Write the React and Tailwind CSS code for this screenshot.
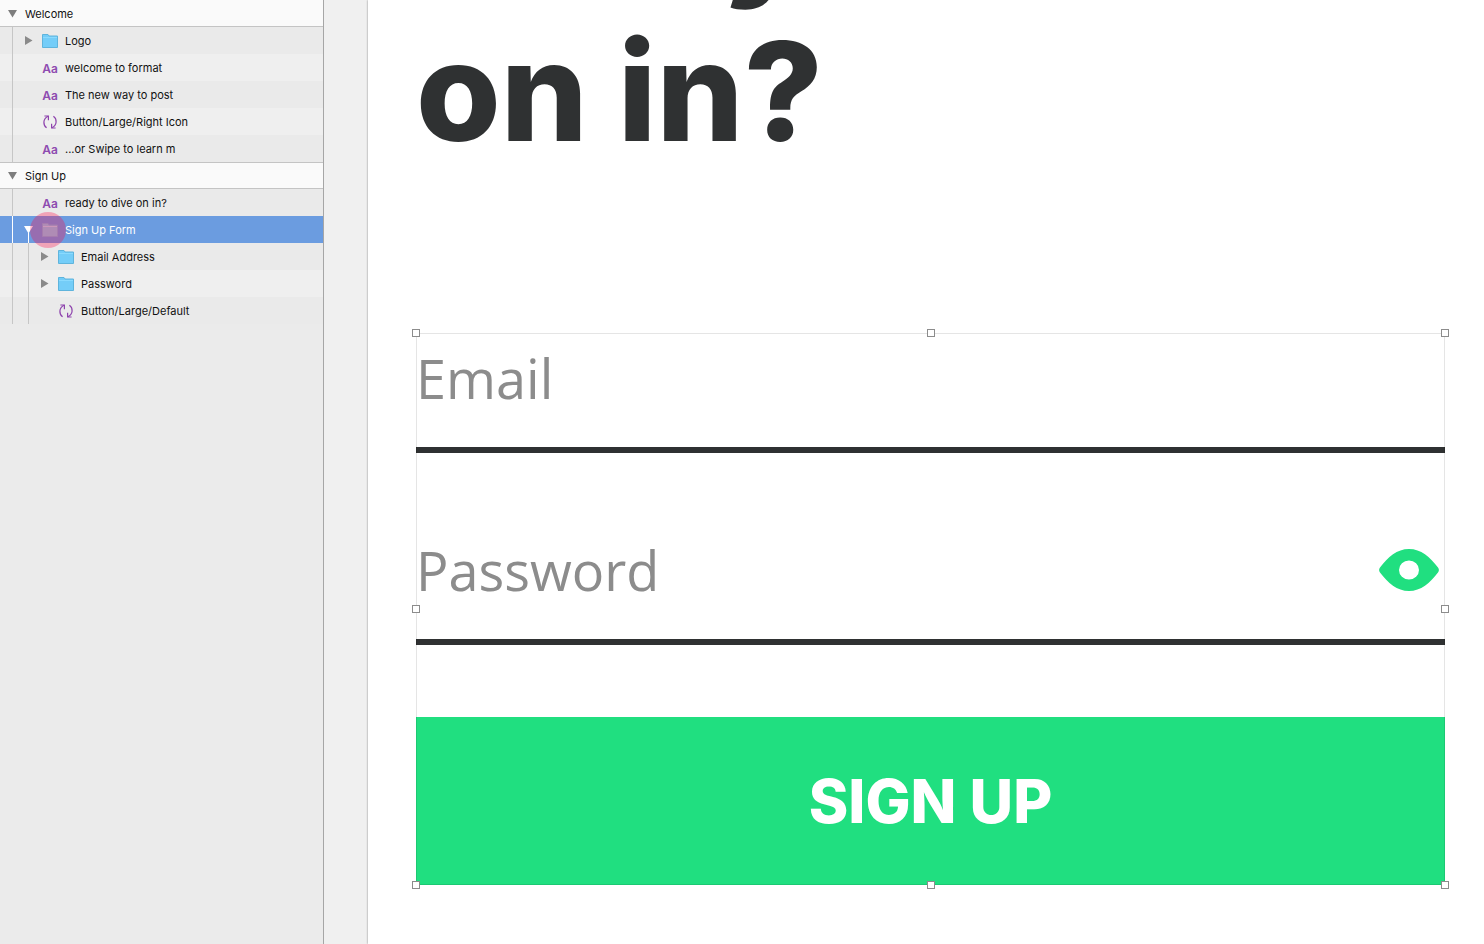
const layers = [
  { type: "artboard", name: "Welcome" },
  { type: "group", name: "Logo", depth: 1 },
  { type: "text", name: "welcome to format", depth: 1 },
  { type: "text", name: "The new way to post", depth: 1 },
  { type: "symbol", name: "Button/Large/Right Icon", depth: 1 },
  { type: "text", name: "...or Swipe to learn m", depth: 1 },
  { type: "artboard", name: "Sign Up" },
  { type: "text", name: "ready to dive on in?", depth: 1 },
  { type: "group", name: "Sign Up Form", depth: 1, open: true, selected: true },
  { type: "group", name: "Email Address", depth: 2 },
  { type: "group", name: "Password", depth: 2 },
  { type: "symbol", name: "Button/Large/Default", depth: 2 },
];

const Arrow = ({ open }) => (
  <svg viewBox="0 0 9 9" className="size-[9px] shrink-0 fill-current" aria-hidden="true">
    {open ? <path d="M0 1h9L4.5 8.500z" /> : <path d="M1 0v9L8.500 4.500z" />}
  </svg>
);

const FolderIcon = ({ muted }) => (
  <svg viewBox="0 0 16 14" className="h-3.5 w-4 shrink-0" aria-hidden="true">
    <path
      d="M0.5 13.5v-13h5.500l1 1.500h8.500v11.500z"
      fill={muted ? "#8cc8e6" : "#74cdf8"}
      stroke={muted ? "#7fb2dc" : "#5fb4dc"}
    />
    <path d="M1 3.500h14" stroke={muted ? "#b4d8ee" : "#8adafe"} />
  </svg>
);

const SymbolIcon = () => (
  <svg
    viewBox="0 0 14 14"
    className="size-3.5 shrink-0"
    fill="none"
    stroke="#8e44ad"
    strokeWidth="1.2"
    aria-hidden="true"
  >
    <path d="M3.600 12.800C1.600 11.500 0.800 9.400 0.900 7 1 4.800 2.200 2.800 5 1.200" />
    <path d="M1.400 1h4v4.200" />
    <path d="M10.400 1.200C12.400 2.500 13.200 4.600 13.100 7 13 9.200 11.800 11.200 9 12.800" />
    <path d="M12.600 13h-4V8.800" />
  </svg>
);

const LayerIcon = ({ layer }) => {
  if (layer.type === "group") return <FolderIcon muted={layer.selected} />;
  if (layer.type === "symbol") return <SymbolIcon />;
  return <span className="pt-0.5 text-xs font-semibold text-[#8e4bb0]">Aa</span>;
};

const ArtboardRow = ({ layer, first }) => (
  <button
    className={`flex h-[27px] w-full items-center gap-2 border-[#c4c4c4] bg-[#fafafa] pl-2 text-left ${first ? "border-b" : "border-y"}`}
  >
    <span className="flex w-[9px] text-[#7d7d7d]">
      <Arrow open />
    </span>
    <span className="pt-0.5">{layer.name}</span>
  </button>
);

const LayerRow = ({ layer, striped }) => {
  const background = layer.selected
    ? "bg-[#6b9ce0] text-white"
    : striped
      ? "bg-[#efefef]"
      : "bg-[#eaeaea]";
  const guide = layer.selected ? "border-white" : "border-[#c6c6c6]";

  return (
    <button className={`flex h-[27px] w-full items-stretch pl-3 text-left ${background}`}>
      <span className={`w-4 shrink-0 border-l ${guide}`} />
      {layer.depth === 2 && <span className={`w-4 shrink-0 border-l ${guide}`} />}
      <span className="-ml-1 flex items-center">
        <span
          className={`relative flex w-[18px] ${layer.selected ? "text-white" : "text-[#8a8a8a]"}`}
        >
          {layer.type === "group" && <Arrow open={layer.open} />}
          {layer.open && <span className="absolute left-1 top-2 h-[10px] w-px bg-white" />}
        </span>
        <span className="relative flex w-4 justify-center">
          <LayerIcon layer={layer} />
          {layer.selected && (
            <span className="absolute -left-3 -top-[11px] size-9 rounded-full bg-[#ff0041]/30" />
          )}
        </span>
        <span className="ml-[7px] pt-0.5">{layer.name}</span>
      </span>
    </button>
  );
};

const Sidebar = () => (
  <nav
    aria-label="Layers"
    className="w-[324px] shrink-0 border-r border-[#a6a6a6] bg-[#ebebeb] text-[11px] text-[#111]"
  >
    <ul>
      {layers.map((layer, i) => (
        <li key={layer.name}>
          {layer.type === "artboard" ? (
            <ArtboardRow layer={layer} first={i === 0} />
          ) : (
            <LayerRow layer={layer} striped={i % 2 === 0} />
          )}
        </li>
      ))}
    </ul>
  </nav>
);

const handles = [
  "left-0 top-0",
  "left-1/2 top-0",
  "left-full top-0",
  "left-0 top-1/2",
  "left-full top-1/2",
  "left-0 top-full",
  "left-1/2 top-full",
  "left-full top-full",
];

const Selection = () => (
  <div className="pointer-events-none absolute inset-0 shadow-[inset_0_0_0_1px_rgba(0,0,0,0.1)]">
    {handles.map((place) => (
      <span
        key={place}
        className={`absolute size-2 -translate-1/2 border border-[#8c8c8c] bg-white ${place}`}
      />
    ))}
  </div>
);

const EyeIcon = () => (
  <svg viewBox="0 0 60 42" className="h-[42px] w-[60px]" aria-hidden="true">
    <path
      fillRule="evenodd"
      fill="#20df80"
      d="M30 0C42 0 51 8 59 18.500Q60.800 21 59 23.500C51 34 42 42 30 42S9 34 1 23.500Q-0.800 21 1 18.500C9 8 18 0 30 0ZM30 11.500A10 9.500 0 1 0 30 30.500A10 9.500 0 1 0 30 11.500Z"
    />
  </svg>
);

const Field = ({ label, ...props }) => (
  <input
    aria-label={label}
    placeholder={label}
    className="h-[120px] w-full border-b-6 border-[#2f3132] bg-transparent pb-6 font-['Open_Sans',sans-serif] text-[54px] text-[#2f3132] outline-none placeholder:text-[#8c8c8c]"
    {...props}
  />
);

const SignUpForm = () => (
  <form className="relative flex flex-col gap-18" onSubmit={(e) => e.preventDefault()}>
    <Field label="Email" type="email" />
    <div className="relative">
      <Field label="Password" type="password" />
      <button type="button" aria-label="Show password" className="absolute right-1.5 top-6">
        <EyeIcon />
      </button>
    </div>
    <button
      type="submit"
      className="h-[168px] w-full bg-[#20df80] text-[60px] font-extrabold text-white"
    >
      SIGN UP
    </button>
    <Selection />
  </form>
);

export default function App() {
  return (
    <div className="flex h-screen overflow-hidden bg-[#f0f0f0] font-['Inter',sans-serif]">
      <Sidebar />
      <main className="ml-11 flex min-w-0 flex-1 flex-col bg-white pl-12 pr-[39px] shadow-[0_0_2px_rgba(0,0,0,0.45)]">
        <h1 className="-mt-[149px] mb-[162px] text-[137px] leading-[160px] font-extrabold text-[#2f3132]">
          ready to dive
          <br />
          on in?
        </h1>
        <SignUpForm />
      </main>
    </div>
  );
}
